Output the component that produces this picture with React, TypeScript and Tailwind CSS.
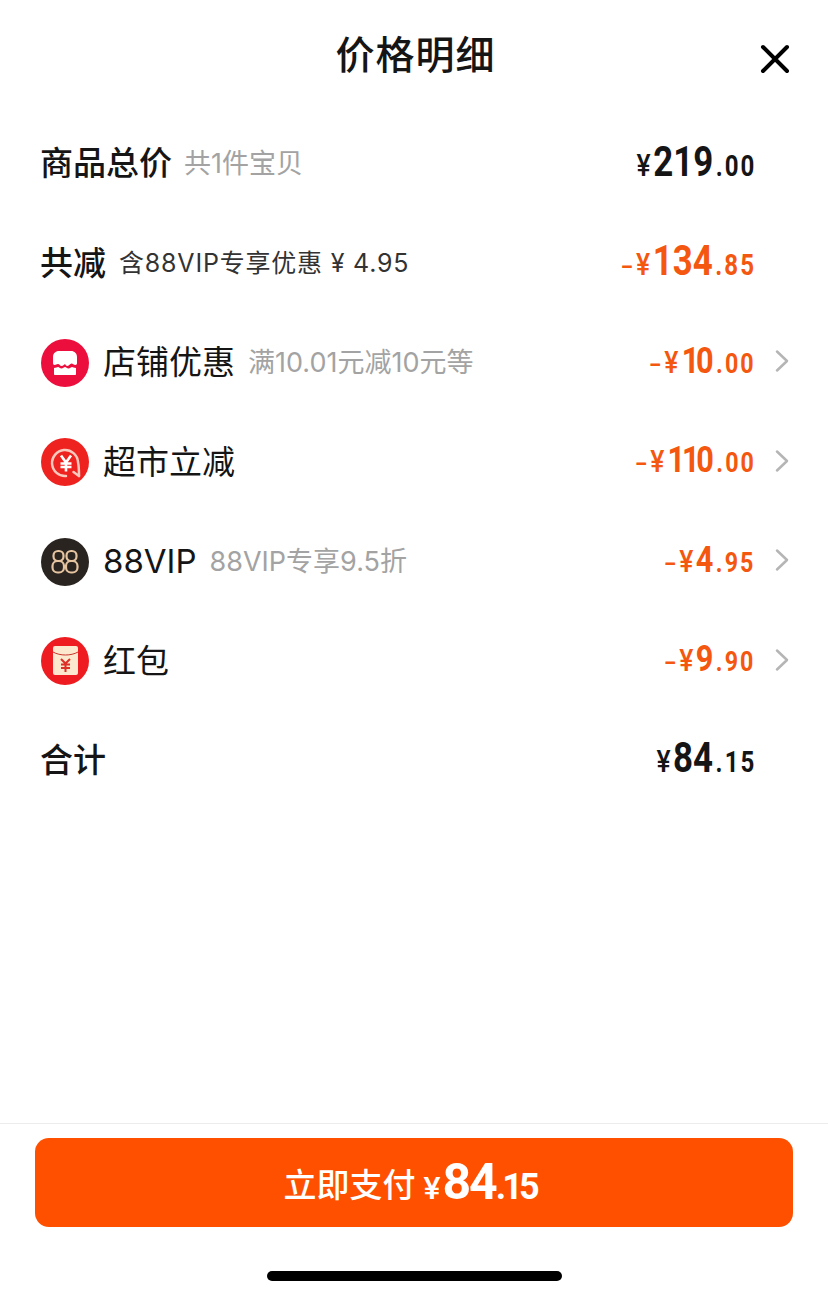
const FONT = "font-['Inter','Noto_Sans_CJK_SC','Noto_Sans',sans-serif]";
const NUM = "font-['Roboto','Noto_Sans_CJK_SC',sans-serif]";

function Price({
  minus,
  big,
  small,
  orange,
  large,
  tight,
}: {
  minus?: boolean;
  big: string;
  small: string;
  orange?: boolean;
  large?: boolean;
  tight?: boolean;
}) {
  return (
    <div
      className={`mb-[5px] flex origin-right scale-x-[0.83] items-baseline font-bold leading-none ${NUM} ${orange ? "text-[#f4570f]" : "text-[#151515]"}`}
    >
      {minus && <span className="mr-[6px] inline-block scale-x-[1.6] text-[28px] font-medium">-</span>}
      <span className={`${tight ? "mr-[4px]" : "mr-[3px]"} text-[32px] font-medium`}>¥</span>
      <span className={`${large ? "text-[42px]" : "text-[37px]"} ${tight ? "tracking-[-4px]" : ""}`}>{big}</span>
      <span className={`${large ? "text-[29px]" : "text-[28px]"} ${tight ? "ml-[7px]" : "ml-[3px]"} tracking-[2.500px]`}>.{small}</span>
    </div>
  );
}

function Chevron() {
  return (
    <svg width="16" height="24" viewBox="0 0 16 24" fill="none" className="mb-[3px] ml-[19px]">
      <path d="M2 2.500l10 9.500L2 21.500" stroke="#b5b5b5" strokeWidth="2.500" strokeLinecap="round" strokeLinejoin="round" />
    </svg>
  );
}

function ShopIcon() {
  return (
    <svg width="48" height="48" viewBox="0 0 48 48">
      <circle cx="24" cy="24" r="24" fill="#ec0f3d" />
      <path d="M18 12h12c3.500 0 6 2.500 6 6v6c0 1-.6 2-1.500 2-2 0-2.500-1.500-4-1.500S28 27 26.500 27 24 25 24 25s-2 2-3.500 2-2-2-3.500-2-2 1-3.500 1c-1 0-1.500-1-1.500-2v-6c0-3.500 2.500-6 6-6z" fill="#fff" />
      <path d="M13 29c2 0 3-1 4-1s2 1.500 3.500 1.500S23 28 24 28s2 1.500 3.500 1.500S30 28 31 28s2 1 4 1v6c0 .6-.5 1-1 1H14c-.5 0-1-.4-1-1z" fill="#fff" />
    </svg>
  );
}

function MarketIcon() {
  return (
    <svg width="48" height="48" viewBox="0 0 48 48">
      <circle cx="24" cy="24" r="24" fill="#ee2320" />
      <path d="M38 38C38 33 38 29 37 24A13 13 0 1 0 25 38" fill="none" stroke="#f9c9bd" strokeWidth="2.500" strokeLinecap="round" />
      <path d="M38 38l-5.500-4" fill="none" stroke="#f9c9bd" strokeWidth="2.500" strokeLinecap="round" />
      <path d="M20 17.500l5 7 5-7M19.500 25.500h11M19.500 29h11M25 24v9.500" fill="none" stroke="#fff" strokeWidth="2.600" />
    </svg>
  );
}

function VipIcon() {
  return (
    <svg width="48" height="48" viewBox="0 0 48 48">
      <circle cx="24" cy="24" r="24" fill="#2a2420" />
      <g fill="none" stroke="#e5c4a0" strokeWidth="2.200">
        <rect x="12.500" y="13" width="10" height="10" rx="4.500" />
        <rect x="11.500" y="23" width="11.500" height="11.500" rx="5" />
        <rect x="25.500" y="13" width="10" height="10" rx="4.500" />
        <rect x="25" y="23" width="11.500" height="11.500" rx="5" />
      </g>
    </svg>
  );
}

function RedPacketIcon() {
  return (
    <svg width="48" height="48" viewBox="0 0 48 48">
      <circle cx="24" cy="24" r="24" fill="#ee1c20" />
      <rect x="12" y="9" width="25" height="29" rx="2" fill="#fbe8cf" />
      <path d="M12 15c3.500 2 8 3 12.500 3S33.500 17 37 15" fill="none" stroke="#c8352c" strokeWidth="1" />
      <path d="M20 22l4.500 4.500L29 22M20 27.500h9M20 31h9M24.500 26.500V35" fill="none" stroke="#dc3028" strokeWidth="2" />
    </svg>
  );
}

const rows = [
  { icon: <ShopIcon />, name: "店铺优惠", note: "满10.01元减10元等", big: "10", small: "00", tight: true },
  { icon: <MarketIcon />, name: "超市立减", note: "", big: "110", small: "00", tight: true },
  { icon: <VipIcon />, name: "88VIP", note: "88VIP专享9.5折", big: "4", small: "95", tight: false },
  { icon: <RedPacketIcon />, name: "红包", note: "", big: "9", small: "90", tight: false },
];

export default function App() {
  return (
    <div className={`flex h-[1299px] w-[828px] flex-col overflow-hidden bg-white text-[#151515] ${FONT}`}>
      <header className="relative flex h-[114px] justify-center pl-[3px] pt-[28px]">
        <h1 className="text-[39px] font-medium leading-[54px] tracking-[1px]">价格明细</h1>
        <svg width="30" height="30" viewBox="0 0 30 30" className="absolute right-[38px] top-[44px]">
          <path d="M3 3l24 24M27 3L3 27" stroke="#000" strokeWidth="4" strokeLinecap="round" />
        </svg>
      </header>

      <main className="flex-1 pl-[40px] pr-[72px]">
        <div className="flex h-[100px] items-center justify-between">
          <div className="flex items-center gap-[12px]">
            <span className="text-[33px] font-medium">商品总价</span>
            <span className="text-[27px] text-[#a3a3a3]">共1件宝贝</span>
          </div>
          <Price big="219" small="00" large />
        </div>

        <div className="flex h-[99px] items-center justify-between">
          <div className="flex items-center gap-[13px]">
            <span className="text-[33px] font-medium">共减</span>
            <span className="text-[25px] tracking-[0.800px] text-[#333]">含88VIP专享优惠 ¥ 4.95</span>
          </div>
          <Price minus orange big="134" small="85" large />
        </div>

        {rows.map((row) => (
          <div key={row.name} className="-mr-[35px] ml-[1px] flex h-[99.500px] items-center">
            {row.icon}
            <div className="flex items-center">
              <span className="ml-[14px] text-[33px]">{row.name}</span>
              {row.note && <span className="ml-[13px] text-[27px] text-[#a3a3a3]">{row.note}</span>}
            </div>
            <div className="ml-auto flex items-center">
              <Price minus orange big={row.big} small={row.small} tight={row.tight} />
              <Chevron />
            </div>
          </div>
        ))}

        <div className="flex h-[99px] items-center justify-between">
          <span className="text-[33px] font-medium">合计</span>
          <Price big="84" small="15" large />
        </div>
      </main>

      <footer className="h-[176px] border-t border-[#ececec] pt-[14px]">
        <button className="mx-auto flex h-[89px] w-[758px] items-center justify-center rounded-[14px] bg-[#ff5000] pr-[9px] text-white">
          <span className="mt-[6px] text-[33px] font-medium">立即支付</span>
          <span className={`mb-[2px] ml-[8px] flex items-baseline font-bold leading-none ${NUM}`}>
            <span className="mr-[2px] text-[32px] font-medium">¥</span>
            <span className="text-[50px] tracking-[-2px]">84</span>
            <span className="text-[36px] tracking-[-4px]">.15</span>
          </span>
        </button>
        <div className="mx-auto mt-[44px] h-[10px] w-[295px] rounded-full bg-black" />
      </footer>
    </div>
  );
}
